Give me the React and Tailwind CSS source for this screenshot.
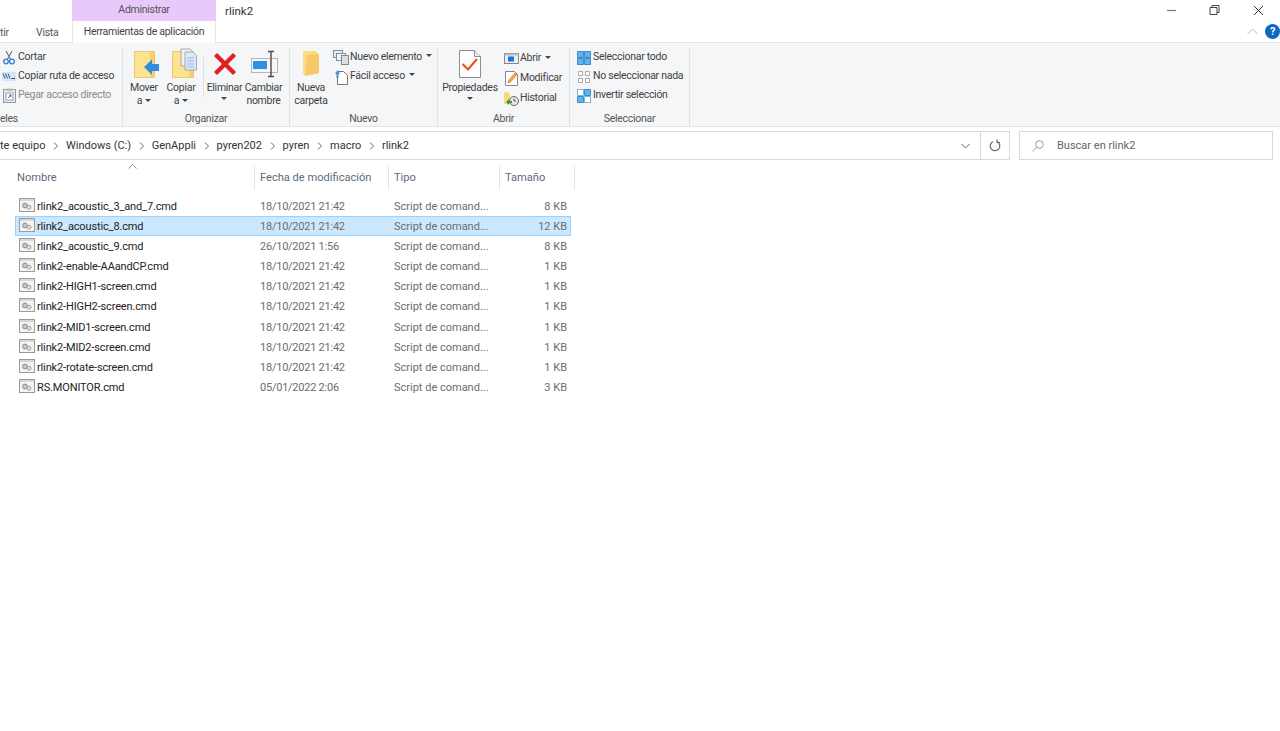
const FONT = "font-['Roboto','Noto_Sans',sans-serif]";

const files = [
  ["rlink2_acoustic_3_and_7.cmd", "18/10/2021 21:42", "8 KB"],
  ["rlink2_acoustic_8.cmd", "18/10/2021 21:42", "12 KB", true],
  ["rlink2_acoustic_9.cmd", "26/10/2021 1:56", "8 KB"],
  ["rlink2-enable-AAandCP.cmd", "18/10/2021 21:42", "1 KB"],
  ["rlink2-HIGH1-screen.cmd", "18/10/2021 21:42", "1 KB"],
  ["rlink2-HIGH2-screen.cmd", "18/10/2021 21:42", "1 KB"],
  ["rlink2-MID1-screen.cmd", "18/10/2021 21:42", "1 KB"],
  ["rlink2-MID2-screen.cmd", "18/10/2021 21:42", "1 KB"],
  ["rlink2-rotate-screen.cmd", "18/10/2021 21:42", "1 KB"],
  ["RS.MONITOR.cmd", "05/01/2022 2:06", "3 KB"],
];

const Caret = () => (
  <svg width="6" height="3" viewBox="0 0 6 3" className="shrink-0"><path d="M0 0h6L3 3z" fill="#444" /></svg>
);

const CmdIcon = () => (
  <svg width="16" height="14" viewBox="0 0 16 14" className="shrink-0">
    <rect x="0.500" y="0.500" width="15" height="13" fill="#f4f4f4" stroke="#9a9a9a" />
    <rect x="1" y="1" width="14" height="2" fill="#d8d8d8" />
    <circle cx="6" cy="7.500" r="2.400" fill="#c9c9c9" stroke="#8a8a8a" />
    <circle cx="10" cy="9.200" r="2" fill="#e2e2e2" stroke="#a0a0a0" />
  </svg>
);

const SmallItem = ({ icon, label, muted, caret }) => (
  <div className="flex h-[19px] items-center whitespace-nowrap">
    <span className="flex w-[18px] shrink-0 justify-center">{icon}</span>
    <span className={muted ? "text-[#8a8a8a]" : "text-[#3f3f3f]"}>{label}</span>
    {caret && <span className="ml-[4px] -mt-[4px]"><Caret /></span>}
  </div>
);

const TallItem = ({ icon, label, caret }) => (
  <div className="flex h-[20px] items-center whitespace-nowrap text-[#3f3f3f]">
    <span className="flex w-[18px] shrink-0 justify-center">{icon}</span>
    <span>{label}</span>
    {caret && <span className="ml-[4px] -mt-[2px]"><Caret /></span>}
  </div>
);

const Big = ({ w, icon, lines, caret }) => (
  <div className="flex shrink-0 flex-col items-center" style={{ width: w }}>
    <div className="flex h-[32px] items-center justify-center">{icon}</div>
    <div className="mt-[1px] text-center leading-[13px] text-[#3f3f3f]">
      {lines.map((l) => (
        <div key={l} className="flex items-center justify-center gap-[3px] whitespace-nowrap">
          {l}
          {caret && l === lines[lines.length - 1] && lines.length > 1 && <Caret />}
        </div>
      ))}
      {caret && lines.length === 1 && <div className="mt-[3px] flex justify-center"><Caret /></div>}
    </div>
  </div>
);

const Group = ({ w, label, children, labelClass = "justify-center" }) => (
  <div className="flex h-full shrink-0 flex-col border-r border-[#dfe1e3]" style={{ width: w }}>
    <div className="flex min-h-0 flex-1">{children}</div>
    <div className={`flex h-[18px] items-center pt-[5px] text-[#555] ${labelClass}`}>{label}</div>
  </div>
);

const IconMove = () => (
  <svg width="30" height="30" viewBox="0 0 30 30">
    <path d="M5.500 2.500h20v26h-20z" fill="#fde28f" stroke="#e8c873" />
    <path d="M21 3h4v25h-4z" fill="#f6cf70" />
    <path d="M15 18l8-7.500V15h7v7h-7v4z" fill="#2f8fdc" />
  </svg>
);
const IconCopy = () => (
  <svg width="32" height="32" viewBox="0 0 32 32">
    <path d="M7.500 3.500h21v26h-21z" fill="#fde28f" stroke="#e8c873" />
    <path d="M24 4h4v25h-4z" fill="#f6cf70" />
    <path d="M16 1h9l3 3v14H16z" fill="#f1f1f1" stroke="#a8a8a8" />
    <path d="M20 4h8l3.500 3.500V22H20z" fill="#dfe8f7" stroke="#a8a8a8" />
    <path d="M22 10h7M22 13h7M22 16h7M22 19h7" stroke="#8db4e8" />
  </svg>
);
const IconDelete = () => (
  <svg width="24" height="24" viewBox="0 0 24 24">
    <path d="M2.500 2.500l19 19M21.500 2.500l-19 19" stroke="#e01f26" strokeWidth="4.400" />
  </svg>
);
const IconRename = () => (
  <svg width="28" height="28" viewBox="0 0 28 28">
    <rect x="1.500" y="8.500" width="26" height="14" fill="#f6f6f6" stroke="#b5b5b5" />
    <rect x="3" y="11" width="14" height="8" fill="#2f8fe0" />
    <path d="M21 2v24M18 1.500h6M18 26.500h6" stroke="#4b4b4b" strokeWidth="1.400" fill="none" />
  </svg>
);
const IconNewFolder = () => (
  <svg width="20" height="28" viewBox="0 0 20 28">
    <path d="M2 1h12l4 3v19l-14 3-2-3z" fill="#fbdc83" />
    <path d="M6 5l12-1v19l-14 3z" fill="#f6c968" />
  </svg>
);
const IconProps = () => (
  <svg width="22" height="28" viewBox="0 0 22 28">
    <path d="M.5.5h15l6 6v21H.5z" fill="#fff" stroke="#8e8e8e" />
    <path d="M15.500.5v6h6" fill="#ececec" stroke="#8e8e8e" />
    <path d="M3.500 14l5.500 5.500L18 9" fill="none" stroke="#e8541e" strokeWidth="2.200" />
  </svg>
);
const IconScissors = () => (
  <svg width="14" height="15" viewBox="0 0 14 15">
    <path d="M4 1l5 9M10 1L5 10" stroke="#777" strokeWidth="1.200" />
    <circle cx="4" cy="11.500" r="2.300" fill="none" stroke="#2f7fd0" strokeWidth="1.300" />
    <circle cx="10" cy="11.500" r="2.300" fill="none" stroke="#2f7fd0" strokeWidth="1.300" />
  </svg>
);
const IconCopyPath = () => (
  <svg width="14" height="9" viewBox="0 0 14 9">
    <rect width="14" height="9" fill="#d6e6f5" />
    <path d="M1 1.500l2 5M3.500 1.500l2 5M6 1.500l2 5" stroke="#2a5a8c" />
    <path d="M9.500 6.500h3.500" stroke="#444" />
  </svg>
);
const IconPaste = () => (
  <svg width="13" height="15" viewBox="0 0 13 15">
    <rect x=".5" y="1.500" width="12" height="13" fill="#e8e8e8" stroke="#9a9a9a" />
    <rect x="4" y=".5" width="5" height="2.500" fill="#bbb" />
    <rect x="3" y="5" width="7" height="7" fill="#fff" stroke="#8aa6c5" />
    <path d="M5 10l3-3M6 7h2v2" stroke="#668" fill="none" />
  </svg>
);
const IconNewItem = () => (
  <svg width="16" height="15" viewBox="0 0 16 15">
    <rect x=".5" y=".5" width="9" height="7" fill="#e4edf7" stroke="#7f8f9f" />
    <rect x="3.500" y="3.500" width="9" height="7" fill="#eef3f9" stroke="#7f8f9f" />
    <rect x="8.500" y="5.500" width="7" height="9" fill="#ddd" stroke="#888" />
  </svg>
);
const IconEasy = () => (
  <svg width="14" height="16" viewBox="0 0 14 16">
    <path d="M3.500 2.500h6l4 4v9h-10z" fill="#fff" stroke="#777" />
    <path d="M1 5l2.500-4L6 5H4.500v4h-2V5z" fill="#4b8ed1" />
  </svg>
);
const IconOpen = () => (
  <svg width="15" height="11" viewBox="0 0 15 11">
    <rect x=".5" y=".5" width="14" height="10" fill="#eee" stroke="#888" />
    <rect x="0.500" y="0.500" width="14" height="2" fill="#bbb" />
    <rect x="4" y="3.500" width="6" height="5" fill="#1677d6" />
  </svg>
);
const IconEdit = () => (
  <svg width="13" height="15" viewBox="0 0 13 15">
    <path d="M.5.5h9l3 3v11H.5z" fill="#fff" stroke="#888" />
    <path d="M3 12l1-3 6-7 2 1.500-6 7z" fill="#f2b134" stroke="#c1392b" strokeWidth=".5" />
  </svg>
);
const IconHistory = () => (
  <svg width="15" height="15" viewBox="0 0 15 15">
    <path d="M0 1h4l2 2v10H0z" fill="#fbd978" />
    <circle cx="10" cy="10" r="4.500" fill="#e8e8e8" stroke="#666" />
    <path d="M10 7.500V10h2" stroke="#555" fill="none" />
    <path d="M2 11l3-3v2h3v2H5v2z" fill="#2aa23c" />
  </svg>
);
const IconSelAll = () => (
  <svg width="14" height="14" viewBox="0 0 14 14">
    <path d="M.5.5h6v6h-6zM7.500.5h6v6h-6zM.5 7.500h6v6h-6zM7.500 7.500h6v6h-6z" fill="#62b2ea" stroke="#3c8ccc" />
  </svg>
);
const IconSelNone = () => (
  <svg width="12" height="12" viewBox="0 0 12 12">
    <path d="M.5.5h4v4h-4zM7.500.5h4v4h-4zM.5 7.500h4v4h-4zM7.500 7.500h4v4h-4z" fill="#fff" stroke="#aaa" />
  </svg>
);
const IconInvert = () => (
  <svg width="14" height="14" viewBox="0 0 14 14">
    <path d="M.5 7.500h6v6h-6zM7.500.5h6v6h-6z" fill="#62b2ea" stroke="#3c8ccc" />
    <path d="M.5.5h6v6h-6zM7.500 7.500h6v6h-6z" fill="#fff" stroke="#7ab4e0" />
  </svg>
);

const Sep = () => (
  <svg width="5" height="8" viewBox="0 0 5 8" className="shrink-0"><path d="M1 .5L4.500 4 1 7.500" fill="none" stroke="#666" /></svg>
);

export default function App() {
  return (
    <div className={`${FONT} flex h-[731px] w-[1280px] flex-col overflow-hidden bg-white text-[10.5px] leading-none tracking-[-0.28px] antialiased`}>
      {/* title row */}
      <div className="flex h-[43px] shrink-0 border-b border-[#e3e5e7]">
        <div className="flex w-[72px] shrink-0 items-end pb-[4px] text-[#555]">
          <span className="w-[36px]">tir</span>
          <span>Vista</span>
        </div>
        <div className="flex w-[144px] shrink-0 flex-col">
          <div className="flex h-[21px] items-center justify-center bg-[#e9c9fb] text-[#555]">Administrar</div>
          <div className="-mb-px flex flex-1 items-center justify-center whitespace-nowrap border-x border-[#e3e5e7] bg-white pt-[1px] text-[#444]">Herramientas de aplicación</div>
        </div>
        <div className="ml-[9px] pt-[5px] text-[11.5px] leading-[13px] tracking-normal text-[#333]">rlink2</div>
        <div className="ml-auto flex flex-col">
          <div className="flex h-[21px] items-center">
            <svg width="150" height="21" viewBox="0 0 150 21">
              <path d="M37 10.500h9" stroke="#777" strokeWidth="1.200" />
              <path d="M80 7.500h7v7h-7zM82 7.500V5.500h7v7h-2" fill="none" stroke="#444" />
              <path d="M124 6l9 9M133 6l-9 9" stroke="#333" />
            </svg>
          </div>
          <div className="flex flex-1 items-center justify-end gap-[7px]">
            <svg width="11" height="7" viewBox="0 0 11 7"><path d="M.5 6l5-5 5 5" fill="none" stroke="#bbb" /></svg>
            <div className="flex h-[15px] w-[15px] items-center justify-center rounded-full bg-[#0a67c2] text-[11px] font-bold text-white">?</div>
          </div>
        </div>
      </div>

      {/* ribbon */}
      <div className="flex h-[84px] shrink-0 border-b border-[#e3e5e7] bg-[#f5f6f7] pt-[5px]">
        <Group w={123} label="eles" labelClass="justify-start">
          <div>
            <SmallItem icon={<IconScissors />} label="Cortar" />
            <SmallItem icon={<IconCopyPath />} label="Copiar ruta de acceso" />
            <SmallItem icon={<IconPaste />} label="Pegar acceso directo" muted />
          </div>
        </Group>
        <Group w={167} label="Organizar">
          <div className="flex pl-[4px]">
            <Big w={34} icon={<IconMove />} lines={["Mover", "a"]} caret />
            <Big w={40} icon={<IconCopy />} lines={["Copiar", "a"]} caret />
            <span className="ml-[2px] mt-[9px] h-[40px] w-px shrink-0 bg-[#dfe1e3]" />
            <Big w={41} icon={<IconDelete />} lines={["Eliminar"]} caret />
            <Big w={37} icon={<IconRename />} lines={["Cambiar", "nombre"]} />
          </div>
        </Group>
        <Group w={148} label="Nuevo">
          <div className="flex">
            <Big w={42} icon={<IconNewFolder />} lines={["Nueva", "carpeta"]} />
            <div>
              <SmallItem icon={<IconNewItem />} label="Nuevo elemento" caret />
              <SmallItem icon={<IconEasy />} label="Fácil acceso" caret />
            </div>
          </div>
        </Group>
        <Group w={132} label="Abrir">
          <div className="flex">
            <Big w={64} icon={<IconProps />} lines={["Propiedades"]} caret />
            <div>
              <TallItem icon={<IconOpen />} label="Abrir" caret />
              <TallItem icon={<IconEdit />} label="Modificar" />
              <TallItem icon={<IconHistory />} label="Historial" />
            </div>
          </div>
        </Group>
        <Group w={120} label="Seleccionar">
          <div className="pl-[5px]">
            <SmallItem icon={<IconSelAll />} label="Seleccionar todo" />
            <SmallItem icon={<IconSelNone />} label="No seleccionar nada" />
            <SmallItem icon={<IconInvert />} label="Invertir selección" />
          </div>
        </Group>
      </div>

      {/* address row */}
      <div className="mt-[4px] flex h-[29px] shrink-0 tracking-normal">
        <div className="flex w-[1010px] shrink-0 items-center border-y border-r border-[#d9d9d9]">
          <div className="flex flex-1 items-center gap-[7.8px] text-[11px] text-[#333]">
            <span>te equipo</span><Sep />
            <span>Windows (C:)</span><Sep />
            <span>GenAppli</span><Sep />
            <span>pyren202</span><Sep />
            <span>pyren</span><Sep />
            <span>macro</span><Sep />
            <span>rlink2</span>
          </div>
          <div className="flex h-full w-[29px] items-center justify-center">
            <svg width="9" height="6" viewBox="0 0 9 6"><path d="M.5 1l4 4 4-4" fill="none" stroke="#666" /></svg>
          </div>
          <div className="flex h-full w-[29px] items-center justify-center border-l border-[#d9d9d9]">
            <svg width="12" height="13" viewBox="0 0 12 13"><path d="M4 2.500A4.800 4.800 0 1 0 8 2.500M8 .5v3h3" fill="none" stroke="#666" strokeWidth="1.200" /></svg>
          </div>
        </div>
        <div className="ml-[9px] flex w-[254px] items-center border border-[#d9d9d9] pl-[12px] text-[11px] text-[#666]">
          <svg width="12" height="12" viewBox="0 0 12 12"><circle cx="7.500" cy="4.500" r="3.800" fill="none" stroke="#999" /><path d="M4.700 7.300L.7 11.300" stroke="#999" /></svg>
          <span className="ml-[13px]">Buscar en rlink2</span>
        </div>
      </div>

      {/* file list */}
      <div className="ml-[15px] mt-[5px] w-[560px] text-[11px] tracking-normal">
        <div className="relative flex h-[25px] text-[11.1px] text-[#5a6b7a]">
          <svg width="9" height="5" viewBox="0 0 9 5" className="absolute left-[113px] top-[-1px]"><path d="M.5 4.500l4-4 4 4" fill="none" stroke="#999" /></svg>
          <div className="flex w-[240px] items-center border-r border-[#e5e5e5] pl-[2px]">Nombre</div>
          <div className="flex w-[134px] items-center whitespace-nowrap border-r border-[#e5e5e5] pl-[5px]">Fecha de modificación</div>
          <div className="flex w-[111px] items-center border-r border-[#e5e5e5] pl-[5px]">Tipo</div>
          <div className="flex w-[75px] items-center border-r border-[#e5e5e5] pl-[5px]">Tamaño</div>
        </div>
        <div className="mt-[6px]">
          {files.map(([name, date, size, sel]) => (
            <div key={name} className={`flex h-[20.08px] w-[556px] items-center whitespace-nowrap border pt-[1px] ${sel ? "border-[#99d1ff] bg-[#cce8ff]" : "border-transparent"}`}>
              <span className="ml-[3px] -mt-[3px] flex w-[18px] shrink-0"><CmdIcon /></span>
              <span className="w-[223px] tracking-[-0.14px] text-[#222]">{name}</span>
              <span className="w-[134px] tracking-[-0.24px] text-[#6d6d6d]">{date}</span>
              <span className="w-[100px] text-[#6d6d6d]">Script de comand...</span>
              <span className="w-[73px] text-right text-[#6d6d6d]">{size}</span>
            </div>
          ))}
        </div>
      </div>
    </div>
  );
}
